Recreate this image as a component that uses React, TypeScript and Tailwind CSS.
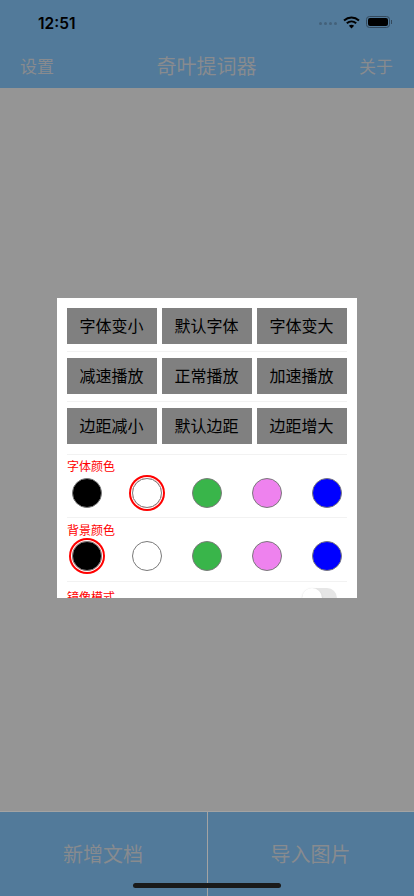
const cjk = { fontFamily: '"Noto Sans CJK SC", "Liberation Sans", sans-serif' };

const buttonRows = [
  ['字体变小', '默认字体', '字体变大'],
  ['减速播放', '正常播放', '加速播放'],
  ['边距减小', '默认边距', '边距增大'],
];

const swatches = ['bg-black', 'bg-white', 'bg-[#39b54a]', 'bg-[#ee82ee]', 'bg-[#0000ff]'];

function ColorRow({ title, selected, tall }: { title: string; selected: number; tall?: boolean }) {
  return (
    <div className={`border-t border-[#f2f2f2] ${tall ? 'h-[64px] pt-[3px]' : 'h-[63px] pt-[2px]'}`}>
      <div className="h-[18px] text-xs leading-[18px] text-[#ff0000]">{title}</div>
      <div className={`flex justify-between px-[5px] ${tall ? 'mt-[2px]' : 'mt-[3px]'}`}>
        {swatches.map((c, i) => (
          <div key={c} className={`h-[30px] w-[30px] rounded-full ${i === selected ? 'ring-2 ring-[#ff0000] ring-offset-1 ring-offset-white' : ''}`}>
            <div className={`h-[30px] w-[30px] rounded-full border-[1.5px] border-[#7a7a7a] ${c}`} />
          </div>
        ))}
      </div>
    </div>
  );
}

export default function App() {
  return (
    <div className="relative flex h-[896px] w-[414px] flex-col overflow-hidden bg-[#959595]" style={cjk}>
      <header className="h-[88px] shrink-0 bg-[#527a9a]">
        <div className="flex h-[44px] items-center justify-between pl-[38px] pr-[22px]">
          <span className="pt-[3px] text-[15.5px] font-semibold text-black" style={{ fontFamily: 'Inter, sans-serif' }}>12:51</span>
          <div className="flex items-center gap-[6px]">
            <div className="mt-[3px] flex gap-[1.5px]">
              {[0, 1, 2, 3].map(i => <div key={i} className="h-[3.5px] w-[3.5px] rounded-full bg-[#44617a]" />)}
            </div>
            <svg width="17" height="13" viewBox="0 0 17 13" fill="none" stroke="#000" strokeWidth="2">
              <path d="M1 4.5C5.5 .5 11.5 .5 16 4.5" />
              <path d="M3.8 7.3c2.8-2.4 6.6-2.4 9.4 0" />
              <path d="M8.5 12.5L5.9 9.7c1.5-1.2 3.7-1.2 5.2 0z" fill="#000" stroke="none" />
            </svg>
            <div className="flex items-center">
              <div className="h-[12.5px] w-[24px] rounded-[3.5px] border border-[#34495c] p-[1px]">
                <div className="h-full w-full rounded-[2px] bg-black" />
              </div>
              <div className="ml-[1px] h-[4px] w-[1px] bg-[#34495c]" />
            </div>
          </div>
        </div>
        <div className="flex h-[44px] items-center justify-between pb-[1px] pl-[20px] pr-[21px] text-[#888b8f]">
          <span className="text-[17px]">设置</span>
          <span className="text-xl">奇叶提词器</span>
          <span className="text-[17px]">关于</span>
        </div>
      </header>

      <main className="flex-1 border-b border-[#a3a3a3]" />

      <footer className="relative flex h-[84px] shrink-0 bg-[#527a9a] text-xl text-[#888b8f]">
        <div className="flex w-[208px] justify-center border-r border-[#a3a3a3] pr-[1px] pt-[28px]">新增文档</div>
        <div className="flex flex-1 justify-center pr-[1px] pt-[28px]">导入图片</div>
        <div className="absolute bottom-[8px] left-[133px] h-[5px] w-[148px] rounded-full bg-[#1a1a1a]" />
      </footer>

      <div className="absolute inset-0 flex items-center justify-center">
        <div className="h-[300px] w-[300px] overflow-hidden bg-white px-[10px] pt-[10px]">
          {buttonRows.map((row, r) => (
            <div key={row[0]} className={r === 2 ? 'h-[46px]' : 'mb-[6px] h-[44px] border-b border-[#f2f2f2]'}>
              <div className="flex gap-[5px]">
                {row.map(label => (
                  <div key={label} className="flex h-[36px] w-[90px] items-center justify-center bg-[#808080] pb-[2px] pr-[1px] text-base text-black">{label}</div>
                ))}
              </div>
            </div>
          ))}
          <ColorRow title="字体颜色" selected={1} />
          <ColorRow title="背景颜色" selected={0} tall />
          <div className="flex h-[30px] items-start justify-between border-t border-[#f2f2f2] pt-[6px]">
            <span className="text-xs leading-[18px] text-[#ff0000]">镜像模式</span>
            <div className="mr-[10px] h-[20px] w-[35px] rounded-full bg-[#e6e6e6]">
              <div className="h-[20px] w-[20px] rounded-full bg-white shadow" />
            </div>
          </div>
        </div>
      </div>
    </div>
  );
}
